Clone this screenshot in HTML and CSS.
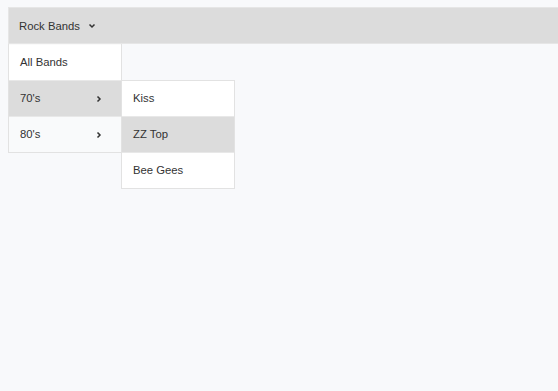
FILE: index.html
```html
<!DOCTYPE html>
<html>
<head>
<meta charset="utf-8">
<link rel="stylesheet" href="styles.css">
</head>
<body>
<nav class="bar">
  <div class="trigger">Rock Bands
    <svg class="chev-down" width="8" height="6" viewBox="0 0 8 6"><path d="M1.5 1.5 L4 4 L6.5 1.5" fill="none" stroke="#333" stroke-width="1.5"/></svg>
  </div>
</nav>
<ul class="menu">
  <li class="item">All Bands</li>
  <li class="item active has-sub">70's
    <svg class="chev-right" width="6" height="8" viewBox="0 0 6 8"><path d="M1.5 1.5 L4 4 L1.5 6.5" fill="none" stroke="#333" stroke-width="1.5"/></svg>
    <ul class="menu sub">
      <li class="item">Kiss</li>
      <li class="item active">ZZ Top</li>
      <li class="item">Bee Gees</li>
    </ul>
  </li>
  <li class="item soft has-sub">80's
    <svg class="chev-right" width="6" height="8" viewBox="0 0 6 8"><path d="M1.5 1.5 L4 4 L1.5 6.5" fill="none" stroke="#333" stroke-width="1.5"/></svg>
  </li>
</ul>
</body>
</html>
```
FILE: styles.css
```css
html, body {
  margin: 0;
  padding: 0;
}
body {
  background: #f8f9fb;
  padding: 7px 0 0 8px;
  font-family: "Liberation Sans", Arial, sans-serif;
  font-size: 11.3px;
  color: #333;
  height: 391px;
  box-sizing: border-box;
  overflow: hidden;
}
.bar {
  background: #dcdcdc;
  border: 1px solid #e6e6e6;
  border-right: none;
  height: 35px;
  display: flex;
  align-items: center;
}
.trigger {
  display: flex;
  align-items: center;
  gap: 8px;
  padding-left: 10px;
}
.chev-down {
  margin-top: 1px;
}
.menu {
  list-style: none;
  margin: 0;
  padding: 0;
  width: 112px;
  background: #fff;
  border: 1px solid #e2e2e2;
  border-top: none;
}
.item {
  position: relative;
  height: 33px;
  padding-bottom: 2px;
  display: flex;
  align-items: center;
  padding-left: 11px;
  border-top: 1px solid #e8e8e8;
}
.menu > .item:first-child {
  border-top: 1px solid #fafafa;
}
.item.active {
  background: #dcdcdc;
}
.item.soft {
  background: #f9fafb;
}
.chev-right {
  position: absolute;
  left: 87px;
  top: 14px;
}
.sub {
  position: absolute;
  left: 112px;
  top: -1px;
  width: 112px;
  border-top: 1px solid #e2e2e2;
}
.sub > .item:first-child {
  border-top: none;
  height: 33px;
}
```
